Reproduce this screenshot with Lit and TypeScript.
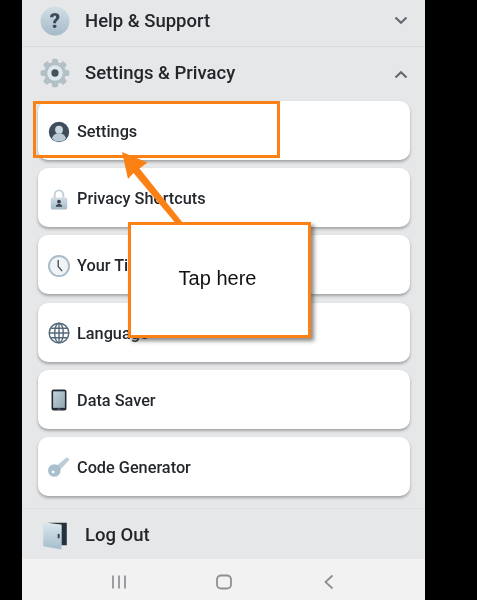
import { LitElement, html, css, svg } from "lit";
import { customElement } from "lit/decorators.js";

const defs = svg`
  <linearGradient id="blue" x1="0" y1="0" x2="0" y2="1">
    <stop offset="0" stop-color="#d3dfe6"/><stop offset="1" stop-color="#a4bac8"/>
  </linearGradient>
  <linearGradient id="screen" x1="0" y1="0" x2="1" y2="1">
    <stop offset="0" stop-color="#c4d2da"/><stop offset="1" stop-color="#8fa6b3"/>
  </linearGradient>
  <linearGradient id="door" x1="0" y1="0" x2="0" y2="1">
    <stop offset="0" stop-color="#d9e5ec"/><stop offset="1" stop-color="#a3bdcc"/>
  </linearGradient>
`;

const icon = (size: number, body: unknown) =>
  html`<svg class="ic" width=${size} height=${size} viewBox="0 0 28 28">${body}</svg>`;

const help = icon(30, svg`
  <circle cx="14" cy="14" r="13.500" fill="url(#blue)"/>
  <text x="14" y="20.500" text-anchor="middle" font-family="Roboto, sans-serif" font-weight="900" font-size="19" fill="#3e4a57">?</text>`);

const gear = icon(30, svg`
  <g fill="#b4c0c8">
    ${[0, 45, 90, 135, 180, 225, 270, 315].map(
      (a) => svg`<rect x="11.200" y="0.600" width="5.600" height="6" rx="1.600" transform="rotate(${a} 14 14)"/>`
    )}
  </g>
  <circle cx="14" cy="14" r="10.200" fill="#b4c0c8"/>
  <circle cx="14" cy="14" r="7.200" fill="#dfe8ed"/>
  <circle cx="14" cy="14" r="3.400" fill="#47525e"/>`);

const person = icon(22, svg`
  <circle cx="14" cy="14" r="13" fill="#3f4d5a"/>
  <circle cx="14" cy="11" r="5" fill="#c9d6de"/>
  <path d="M5 22.500c1.200-5 4.800-7 9-7s7.800 2 9 7a13 13 0 0 1-18 0z" fill="#b9cad4"/>`);

const lock = icon(22, svg`
  <path d="M8.500 13V8.500a5.500 5.500 0 0 1 11 0V13" fill="none" stroke="#c3ced6" stroke-width="2.400"/>
  <rect x="3.500" y="12" width="21" height="15.500" rx="2.500" fill="url(#blue)"/>
  <circle cx="14" cy="17.400" r="2.400" fill="#36424e"/>
  <path d="M9.800 24c.3-2.600 2-3.600 4.200-3.600s3.900 1 4.200 3.600z" fill="#36424e"/>`);

const clock = icon(22, svg`
  <circle cx="14" cy="14" r="12.800" fill="#f0f4f6" stroke="#a9bcc8" stroke-width="2.400"/>
  <path d="M13 6.500V14.500L18 20.500" fill="none" stroke="#4a5663" stroke-width="1.800"/>`);

const globe = icon(22, svg`
  <g fill="none" stroke="#54697a" stroke-width="1.800">
    <circle cx="14" cy="14" r="12.500"/>
    <ellipse cx="14" cy="14" rx="5.500" ry="12.500"/>
    <path d="M14 1.500V26.500M1.500 14H26.500M3.600 8H24.400M3.600 20H24.400"/>
  </g>`);

const phone = icon(22, svg`
  <rect x="4.500" y="0.500" width="19" height="27" rx="2.600" fill="#222c36"/>
  <rect x="6.500" y="3" width="15" height="21" fill="url(#screen)"/>
  <rect x="12" y="25" width="4" height="1.300" fill="#5b6772"/>`);

const key = icon(22, svg`
  <path d="M10 13L24 1.500L27.500 4.500L15 18z" fill="#bccdd8"/>
  <path fill-rule="evenodd" d="M8 10.500a8 8 0 1 1 0 16a8 8 0 0 1 0-16zM6.500 18.500a1.800 1.800 0 1 0 .01 0z" fill="#a9bfcc"/>`);

const logout = icon(30, svg`
  <path d="M7 2.500H25V23.500H20V4.500z" fill="#25323d"/>
  <path d="M3 3.500L20 4.500V27.500L3 24.500z" fill="url(#door)"/>
  <rect x="16.500" y="13" width="1.800" height="4" fill="#33414d"/>`);

const chevron = (up: boolean) => html`<svg class="chev" width="14" height="9" viewBox="0 0 14 9">
  <path d=${up ? "M1.500 7.500L7 2.200L12.500 7.500" : "M1.500 1.500L7 6.800L12.500 1.500"} fill="none" stroke="#646a72" stroke-width="2.200"/>
</svg>`;

const items: [unknown, string][] = [
  [person, "Settings"],
  [lock, "Privacy Shortcuts"],
  [clock, "Your Time on Facebook"],
  [globe, "Language"],
  [phone, "Data Saver"],
  [key, "Code Generator"],
];

@customElement("app-root")
export class AppRoot extends LitElement {
  static styles = css`
    :host { display: block; width: 477px; height: 600px; overflow: hidden; background: #000; font-family: Roboto, "Liberation Sans", sans-serif; }
    .stage { position: relative; width: 477px; height: 600px; filter: blur(0.35px); }
    .phone { margin-left: 22px; width: 403px; height: 600px; background: #e6e7e9; display: flex; flex-direction: column; }
    .row { display: flex; align-items: center; box-sizing: border-box; padding: 0 17px 0 18px; font-size: 18.500px; font-weight: 500; color: #22262b; }
    .row .ic { flex: none; margin-right: 15px; }
    .row .label { flex: 1; }
    .help { height: 47px; padding-bottom: 5px; border-bottom: 1px solid #dadcdf; }
    .sett { height: 51px; }
    .sett .chev { margin-top: 4px; }
    .cards { display: flex; flex-direction: column; gap: 8.200px; padding: 3px 15px 0 16px; }
    .card { height: 59px; box-sizing: border-box; background: #fff; border-radius: 10px; box-shadow: 0 2px 3px rgba(80, 80, 80, 0.45); display: flex; align-items: center; padding: 2px 0 0 10px; font-size: 16.300px; font-weight: 500; color: #24282d; white-space: nowrap; overflow: hidden; }
    .card .ic { flex: none; margin-right: 7px; }
    .sep { margin-top: 12px; border-top: 1px solid #dcdee0; }
    .logout { height: 50px; padding-top: 2px; }
    .nav { flex: 1; background: #f2f2f3; display: flex; align-items: center; }
    .nav svg { position: relative; top: 3px; }
    .nav .a { margin-left: 89px; }
    .nav .b { margin-left: 89px; }
    .nav .c { margin-left: 91px; }
    .focus { position: absolute; left: 33px; top: 101px; width: 247px; height: 57px; box-sizing: border-box; border: 3px solid #fb8115; }
    .arrow { position: absolute; left: 0; top: 0; pointer-events: none; }
    .callout { position: absolute; left: 128px; top: 222px; width: 183px; height: 116px; box-sizing: border-box; background: #fff; border: 3px solid #fb8115; box-shadow: 3px 3px 4px rgba(60, 60, 60, 0.6); display: flex; align-items: center; justify-content: center; padding: 0 4px 3px 0; font-family: "Liberation Sans", Arial, sans-serif; font-size: 20px; color: #111; }
    .defs { position: absolute; width: 0; height: 0; }
  `;

  render() {
    return html`
      <div class="stage">
        <svg class="defs">${defs}</svg>
        <div class="phone">
          <div class="row help">${help}<span class="label">Help &amp; Support</span>${chevron(false)}</div>
          <div class="row sett">${gear}<span class="label">Settings &amp; Privacy</span>${chevron(true)}</div>
          <div class="cards">
            ${items.map(([i, t]) => html`<div class="card">${i}<span>${t}</span></div>`)}
          </div>
          <div class="sep"></div>
          <div class="row logout">${logout}<span class="label">Log Out</span></div>
          <div class="nav">
            <svg class="a" width="16" height="16" viewBox="0 0 16 16"><path d="M2 1.500V14.500M8 1.500V14.500M14 1.500V14.500" stroke="#8d8f92" stroke-width="1.700" fill="none"/></svg>
            <svg class="b" width="16" height="16" viewBox="0 0 16 16"><rect x="1" y="1.500" width="14" height="13" rx="4" stroke="#8d8f92" stroke-width="1.800" fill="none"/></svg>
            <svg class="c" width="12" height="16" viewBox="0 0 12 16"><path d="M9.500 1.500L2.500 8L9.500 14.500" stroke="#8d8f92" stroke-width="1.800" fill="none"/></svg>
          </div>
        </div>
        <div class="focus"></div>
        <svg class="arrow" width="477" height="600" viewBox="0 0 477 600">
          <path d="M122 152L147.500 162.500L139.500 168.500L182.500 222.500L175 222.500L133.500 173L128 179z" fill="#fb8115"/>
        </svg>
        <div class="callout">Tap here</div>
      </div>
    `;
  }
}
